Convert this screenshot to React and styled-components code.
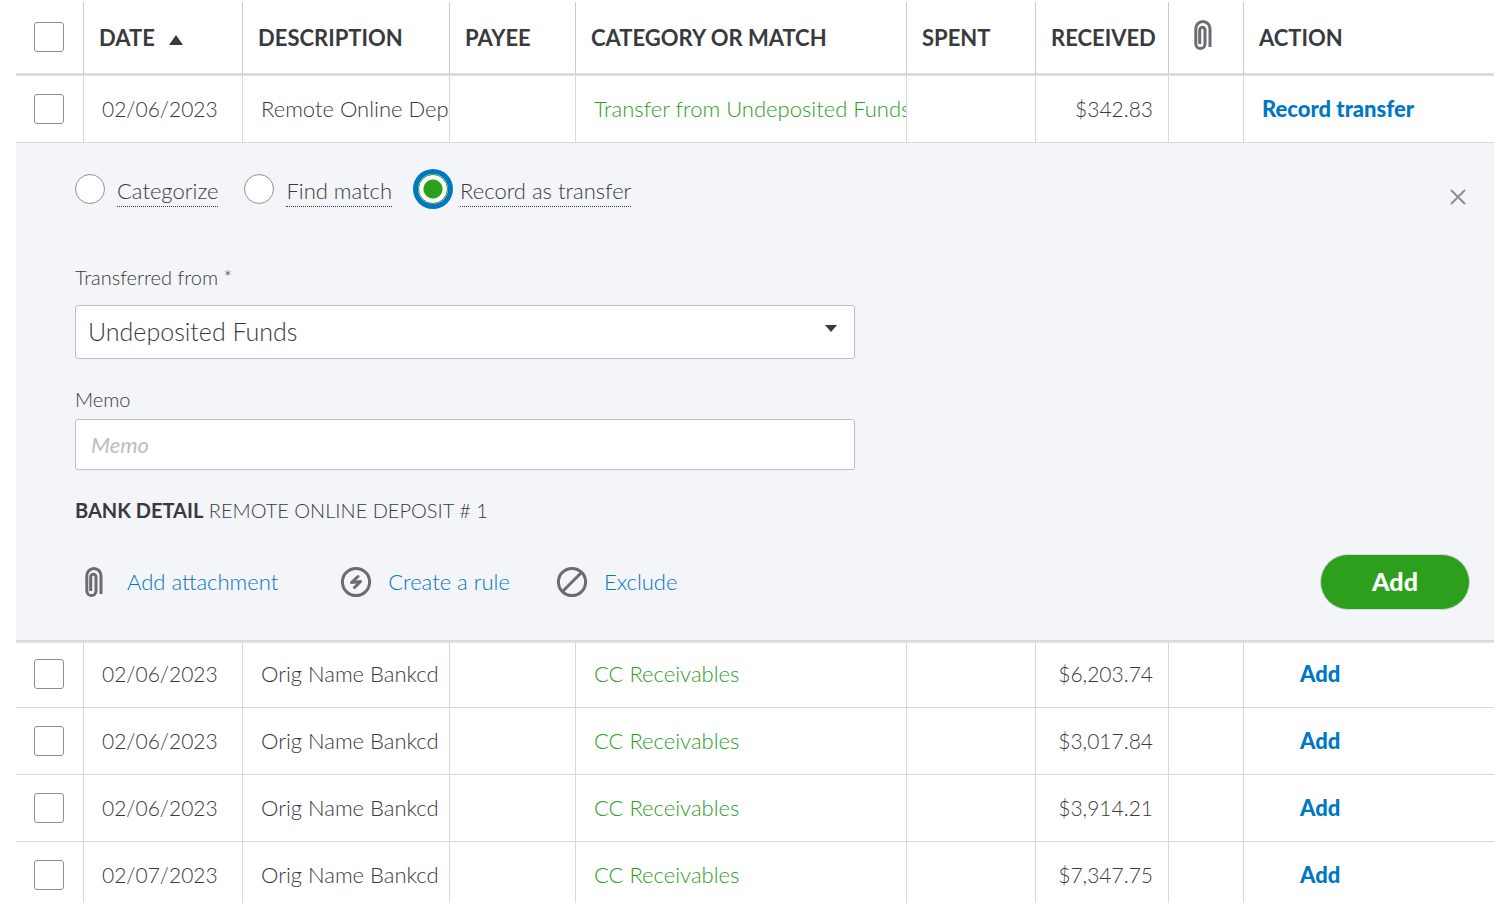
import React, { useState } from 'react'
import styled, { createGlobalStyle, css } from 'styled-components'

const GlobalStyle = createGlobalStyle`
    * {
        box-sizing: border-box;
    }

    body {
        margin: 0;
        background: #fff;
        color: #393a3d;
        font-family: Lato, 'Liberation Sans', sans-serif;
        font-size: 22px;
        font-weight: 300;
        line-height: 28px;
    }
`

const Page = styled.main`
    padding: 2px 0 0 16px;
`

const Table = styled.table`
    width: 100%;
    min-width: 1280px;
    table-layout: fixed;
    border-collapse: separate;
    border-spacing: 0;
`

const Col = styled.col`
    width: ${({ $width }) => ($width ? `${$width}px` : 'auto')};
`

const HeadCell = styled.th`
    height: 74px;
    padding: 0 0 0 15px;
    border-bottom: 3px solid #dcdcdc;
    border-left: 1px solid #bccde0;
    font-size: 22px;
    font-weight: 700;
    text-align: left;
    white-space: nowrap;

    &:first-child {
        padding: 0 0 2px 18px;
        border-left: 0;
    }
`

const Cell = styled.td`
    height: 67px;
    padding: 0 0 0 18px;
    border-bottom: 1px solid #d4d7dc;
    border-left: 1px solid #d4d7dc;
    overflow: hidden;
    white-space: nowrap;

    &:first-child {
        border-left: 0;
    }

    ${({ $numeric }) => $numeric && css`
        font-size: 21px;
    `}

    ${({ $right }) => $right && css`
        padding-left: 0;
        padding-right: 15px;
        text-align: right;
    `}
`

const Row = styled.tr`
    ${({ $afterPanel }) => $afterPanel && css`
        ${Cell} {
            box-shadow: inset 0 2px #e3e3e3;
        }
    `}
`

const Checkbox = styled.input.attrs({ type: 'checkbox' })`
    appearance: none;
    display: block;
    width: 30px;
    height: 30px;
    margin: 0;
    border: 1px solid #8d9096;
    border-radius: 3px;
    background: #fff;

    &:checked {
        background: #2ca01c;
    }
`

const SortButton = styled.button`
    display: flex;
    align-items: center;
    gap: 14px;
    padding: 0;
    border: 0;
    background: none;
    color: inherit;
    font: inherit;

    svg {
        margin-top: 4px;
    }
`

const Category = styled.span`
    color: #2ca01c;
`

const RowAction = styled.button`
    display: block;
    padding: 0;
    margin-left: ${({ $indent }) => ($indent ? '38px' : '0')};
    border: 0;
    background: none;
    color: #0077c5;
    font: inherit;
    font-weight: 900;
`

const PanelCell = styled.td`
    height: 498px;
    padding: 0;
    border-bottom: 1px solid #d4d7dc;
    background: #f4f5f8;
    vertical-align: top;
`

const Panel = styled.form`
    padding: 26px 24px 30px 59px;
`

const PanelTop = styled.div`
    display: flex;
    justify-content: space-between;
    align-items: flex-start;
    margin-bottom: 54px;
`

const Options = styled.div`
    display: flex;
    align-items: center;
    height: 40px;
    gap: 26px;
`

const Option = styled.label`
    display: flex;
    align-items: center;
    gap: 12px;

    span {
        border-bottom: 1px dotted #393a3d;
        margin-top: 4px;
        line-height: 30px;
    }
`

const Radio = styled.input.attrs({ type: 'radio' })`
    appearance: none;
    width: 30px;
    height: 30px;
    margin: 0;
    border: 1px solid #8d9096;
    border-radius: 50%;
    background: #fff;

    &:checked {
        border-color: #2ca01c;
        background: radial-gradient(circle, #2ca01c 9px, #fff 10px);
        box-shadow: 0 0 0 5px #0077c5;
    }
`

const CloseButton = styled.button`
    display: flex;
    padding: 4px;
    margin-top: 16px;
    border: 0;
    background: none;
    color: #8d9096;
`

const Field = styled.div`
    display: flex;
    flex-direction: column;
    max-width: 780px;
    gap: ${({ $gap }) => $gap}px;
    margin-bottom: 26px;

    label {
        font-size: 20px;
    }
`

const SelectBox = styled.div`
    display: grid;
    align-items: center;

    > * {
        grid-area: 1 / 1;
    }

    svg {
        justify-self: end;
        margin: 0 18px 8px 0;
        pointer-events: none;
    }
`

const Select = styled.select`
    appearance: none;
    width: 100%;
    height: 54px;
    padding: 0 40px 2px 12px;
    border: 1px solid #babec5;
    border-radius: 3px;
    background: #fff;
    color: inherit;
    font: inherit;
    font-size: 25px;
`

const TextInput = styled.input`
    height: 51px;
    padding: 0 15px;
    border: 1px solid #babec5;
    border-radius: 3px;
    background: #fff;
    color: inherit;
    font: inherit;

    &::placeholder {
        color: #babec5;
        font-style: italic;
        font-weight: 400;
        opacity: 1;
    }
`

const BankDetail = styled.p`
    margin: 0;
    font-size: 20px;

    b {
        font-weight: 700;
    }
`

const PanelFooter = styled.div`
    display: flex;
    justify-content: space-between;
    align-items: center;
    margin-top: 30px;
`

const Links = styled.div`
    display: flex;
    gap: 46px;
`

const IconLink = styled.a`
    display: flex;
    align-items: center;
    gap: 16px;
    color: #0077c5;
    text-decoration: none;

    &:first-child {
        margin-right: 16px;
    }
`

const AddButton = styled.button`
    width: 150px;
    height: 56px;
    padding: 0 0 2px;
    border: 1px solid #d4d7dc;
    border-radius: 28px;
    background: #2ca01c;
    color: #fff;
    font: inherit;
    font-size: 25px;
    font-weight: 900;
`

const Paperclip = ({ title }) => (
    <svg width="36" height="32" viewBox="0 0 36 32" fill="none" stroke="#6b6c72" strokeWidth="3" role={title ? 'img' : undefined} aria-label={title}>
        <path d="M26 28V9.600a7.100 7.100 0 0 0-14.200 0V25a4.600 4.600 0 0 0 9.200 0V11a2.650 2.650 0 0 0-5.300 0V25" />
    </svg>
)

const RuleIcon = () => (
    <svg width="32" height="32" viewBox="0 0 32 32" fill="none" stroke="#6b6c72" strokeWidth="3" strokeLinecap="round" strokeLinejoin="round">
        <circle cx="16" cy="16" r="13.6" />
        <path d="M18 10.500l-6.500 6 9-1L14.500 21.500" />
    </svg>
)

const ExcludeIcon = () => (
    <svg width="32" height="32" viewBox="0 0 32 32" fill="none" stroke="#6b6c72" strokeWidth="3">
        <circle cx="16" cy="16" r="13.6" />
        <path d="M6.500 25.500l19-19" />
    </svg>
)

const columns = [67, 159, 207, 126, null, 129, 133, 75, 251]

const transactions = [
    { date: '02/06/2023', description: 'Remote Online Deposit', category: 'Transfer from Undeposited Funds', received: '$342.83', action: 'Record transfer', expanded: true },
    { date: '02/06/2023', description: 'Orig Name Bankcd', category: 'CC Receivables', received: '$6,203.74', action: 'Add' },
    { date: '02/06/2023', description: 'Orig Name Bankcd', category: 'CC Receivables', received: '$3,017.84', action: 'Add' },
    { date: '02/06/2023', description: 'Orig Name Bankcd', category: 'CC Receivables', received: '$3,914.21', action: 'Add' },
    { date: '02/07/2023', description: 'Orig Name Bankcd', category: 'CC Receivables', received: '$7,347.75', action: 'Add' },
]

const options = ['Categorize', 'Find match', 'Record as transfer']

const TransferPanel = () => {
    const [option, setOption] = useState('Record as transfer');
    const [memo, setMemo] = useState('');

    return (
        <Panel onSubmit={e => e.preventDefault()}>
            <PanelTop>
                <Options>
                    {options.map(name => (
                        <Option key={name}>
                            <Radio name="option" checked={option === name} onChange={() => setOption(name)} />
                            <span>{name}</span>
                        </Option>
                    ))}
                </Options>
                <CloseButton type="button" aria-label="Close">
                    <svg width="16" height="16" viewBox="0 0 16 16" stroke="currentColor" strokeWidth="2" strokeLinecap="round">
                        <path d="M1.500 1.500l13 13M14.500 1.500l-13 13" />
                    </svg>
                </CloseButton>
            </PanelTop>
            <Field $gap={14}>
                <label htmlFor="from">Transferred from *</label>
                <SelectBox>
                    <Select id="from">
                        <option>Undeposited Funds</option>
                    </Select>
                    <svg width="12" height="7" viewBox="0 0 12 7" fill="#393a3d">
                        <path d="M0 0h12L6 7z" />
                    </svg>
                </SelectBox>
            </Field>
            <Field $gap={6}>
                <label htmlFor="memo">Memo</label>
                <TextInput id="memo" placeholder="Memo" value={memo} onChange={e => setMemo(e.target.value)} />
            </Field>
            <BankDetail><b>BANK DETAIL</b> REMOTE ONLINE DEPOSIT # 1</BankDetail>
            <PanelFooter>
                <Links>
                    <IconLink href="#attachment"><Paperclip />Add attachment</IconLink>
                    <IconLink href="#rule"><RuleIcon />Create a rule</IconLink>
                    <IconLink href="#exclude"><ExcludeIcon />Exclude</IconLink>
                </Links>
                <AddButton type="submit">Add</AddButton>
            </PanelFooter>
        </Panel>
    )
}

const App = () => (
    <Page>
        <GlobalStyle />
        <Table>
            <colgroup>
                {columns.map((width, index) => <Col key={index} $width={width} />)}
            </colgroup>
            <thead>
                <tr>
                    <HeadCell><Checkbox aria-label="Select all" /></HeadCell>
                    <HeadCell>
                        <SortButton type="button">
                            DATE
                            <svg width="14" height="10" viewBox="0 0 14 10" fill="#393a3d">
                                <path d="M7 0l7 10H0z" />
                            </svg>
                        </SortButton>
                    </HeadCell>
                    <HeadCell>DESCRIPTION</HeadCell>
                    <HeadCell>PAYEE</HeadCell>
                    <HeadCell>CATEGORY OR MATCH</HeadCell>
                    <HeadCell>SPENT</HeadCell>
                    <HeadCell>RECEIVED</HeadCell>
                    <HeadCell><Paperclip title="Attachments" /></HeadCell>
                    <HeadCell>ACTION</HeadCell>
                </tr>
            </thead>
            <tbody>
                {transactions.map((item, index) => (
                    <React.Fragment key={index}>
                        <Row $afterPanel={index > 0 && transactions[index - 1].expanded}>
                            <Cell><Checkbox aria-label={`Select ${item.description}`} /></Cell>
                            <Cell $numeric>{item.date}</Cell>
                            <Cell>{item.description}</Cell>
                            <Cell />
                            <Cell><Category>{item.category}</Category></Cell>
                            <Cell />
                            <Cell $numeric $right>{item.received}</Cell>
                            <Cell />
                            <Cell><RowAction type="button" $indent={!item.expanded}>{item.action}</RowAction></Cell>
                        </Row>
                        {item.expanded && (
                            <tr>
                                <PanelCell colSpan={columns.length}><TransferPanel /></PanelCell>
                            </tr>
                        )}
                    </React.Fragment>
                ))}
            </tbody>
        </Table>
    </Page>
)

export default App
